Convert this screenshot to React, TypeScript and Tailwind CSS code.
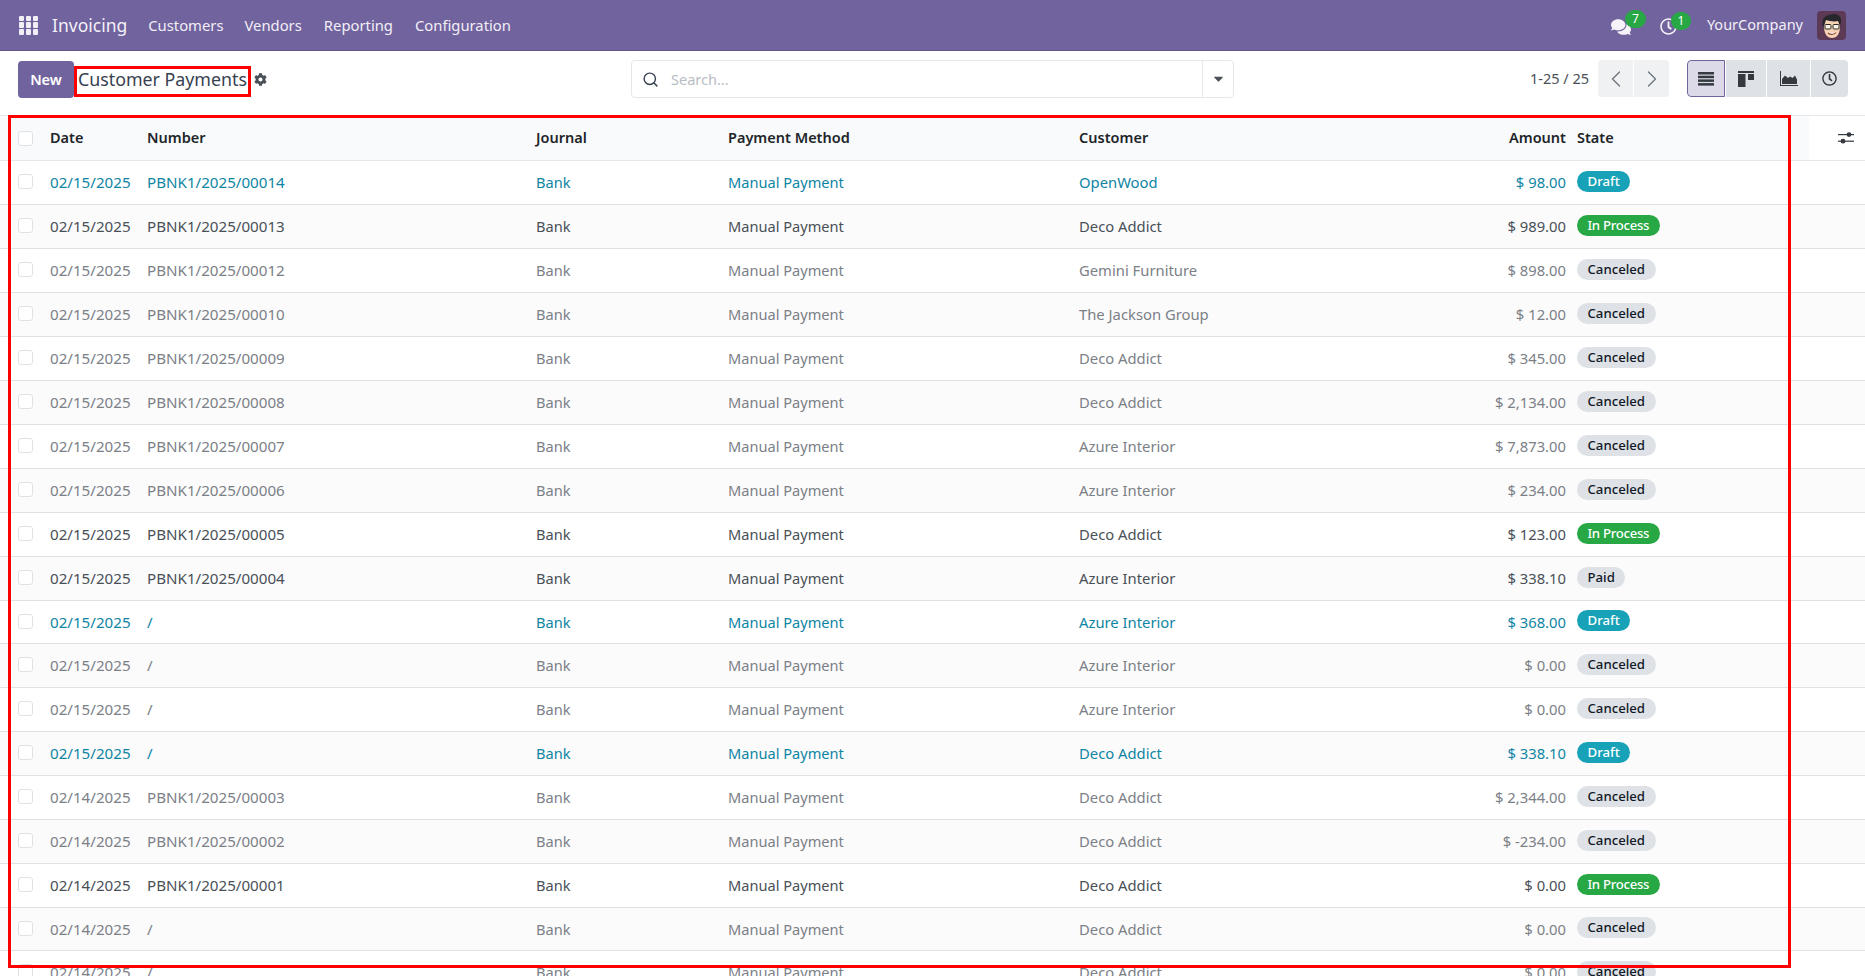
import { ChevronLeft, ChevronRight, Search } from "lucide-react";
import { FaCaretDown, FaCog, FaComments, FaRegClock } from "react-icons/fa";

type State = "Draft" | "In Process" | "Canceled" | "Paid";

interface Payment {
  date: string;
  number: string;
  customer: string;
  amount: string;
  state: State;
}

const payments: Payment[] = [
  { date: "02/15/2025", number: "PBNK1/2025/00014", customer: "OpenWood", amount: "$ 98.00", state: "Draft" },
  { date: "02/15/2025", number: "PBNK1/2025/00013", customer: "Deco Addict", amount: "$ 989.00", state: "In Process" },
  { date: "02/15/2025", number: "PBNK1/2025/00012", customer: "Gemini Furniture", amount: "$ 898.00", state: "Canceled" },
  { date: "02/15/2025", number: "PBNK1/2025/00010", customer: "The Jackson Group", amount: "$ 12.00", state: "Canceled" },
  { date: "02/15/2025", number: "PBNK1/2025/00009", customer: "Deco Addict", amount: "$ 345.00", state: "Canceled" },
  { date: "02/15/2025", number: "PBNK1/2025/00008", customer: "Deco Addict", amount: "$ 2,134.00", state: "Canceled" },
  { date: "02/15/2025", number: "PBNK1/2025/00007", customer: "Azure Interior", amount: "$ 7,873.00", state: "Canceled" },
  { date: "02/15/2025", number: "PBNK1/2025/00006", customer: "Azure Interior", amount: "$ 234.00", state: "Canceled" },
  { date: "02/15/2025", number: "PBNK1/2025/00005", customer: "Deco Addict", amount: "$ 123.00", state: "In Process" },
  { date: "02/15/2025", number: "PBNK1/2025/00004", customer: "Azure Interior", amount: "$ 338.10", state: "Paid" },
  { date: "02/15/2025", number: "/", customer: "Azure Interior", amount: "$ 368.00", state: "Draft" },
  { date: "02/15/2025", number: "/", customer: "Azure Interior", amount: "$ 0.00", state: "Canceled" },
  { date: "02/15/2025", number: "/", customer: "Azure Interior", amount: "$ 0.00", state: "Canceled" },
  { date: "02/15/2025", number: "/", customer: "Deco Addict", amount: "$ 338.10", state: "Draft" },
  { date: "02/14/2025", number: "PBNK1/2025/00003", customer: "Deco Addict", amount: "$ 2,344.00", state: "Canceled" },
  { date: "02/14/2025", number: "PBNK1/2025/00002", customer: "Deco Addict", amount: "$ -234.00", state: "Canceled" },
  { date: "02/14/2025", number: "PBNK1/2025/00001", customer: "Deco Addict", amount: "$ 0.00", state: "In Process" },
  { date: "02/14/2025", number: "/", customer: "Deco Addict", amount: "$ 0.00", state: "Canceled" },
  { date: "02/14/2025", number: "/", customer: "Deco Addict", amount: "$ 0.00", state: "Canceled" },
];

const badgeClass: Record<State, string> = {
  Draft: "bg-[#17a2b8] text-white",
  "In Process": "bg-[#28a745] text-white tracking-[-0.3px]",
  Canceled: "bg-[#dee2e6] text-[#111827]",
  Paid: "bg-[#dee2e6] text-[#111827]",
};

const rowText: Record<State, string> = {
  Draft: "text-[#0f85a3]",
  "In Process": "text-[#495057]",
  Paid: "text-[#495057]",
  Canceled: "text-[#7b8087]",
};

function AppsIcon() {
  return (
    <div className="grid grid-cols-3 gap-[1.5px] w-[19px] h-[19px]">
      {Array.from({ length: 9 }).map((_, i) => (
        <span key={i} className="bg-[#f1eff6] rounded-[1px]" />
      ))}
    </div>
  );
}

function Avatar() {
  return (
    <svg width="29" height="29" viewBox="0 0 29 29" className="rounded-[4px]">
      <rect width="29" height="29" fill="#5c3a56" />
      <path d="M7 15c0 8 3 12 8 12s8-4 8-12-3-8-8-8-8 1-8 8z" fill="#f6d3b2" />
      <path d="M6 16c-2-7 1-11 6-12 4-2 10-1 11 2 2 2 1 6 0 9l-2-5c-4 1-9 0-12-1-1 2-1 5-3 7z" fill="#26262b" />
      <rect x="8" y="13.5" width="6" height="4.5" rx="1" fill="#fdf2e3" stroke="#2a2a2e" strokeWidth="1" />
      <rect x="16" y="13.5" width="6" height="4.5" rx="1" fill="#fdf2e3" stroke="#2a2a2e" strokeWidth="1" />
      <path d="M11 22c2 2 6 2 8-.5" stroke="#8a4a3a" strokeWidth="1.2" fill="#fff" />
    </svg>
  );
}

function Checkbox() {
  return <span className="block w-[15px] h-[15px] rounded-[3px] border border-[#dee2e6] bg-white" />;
}

function NavBar() {
  return (
    <header className="h-[51px] bg-[#71639e] border-b border-[#5f5387] flex items-center text-white pl-[19px] pr-[19px]">
      <AppsIcon />
      <span className="ml-[14px] text-[17.5px] text-[#f3f1f8]">Invoicing</span>
      <nav className="flex ml-[21px] text-[14.8px] text-[#f1eff6]">
        <span>Customers</span>
        <span className="ml-[21px]">Vendors</span>
        <span className="ml-[22px]">Reporting</span>
        <span className="ml-[22px]">Configuration</span>
      </nav>
      <div className="ml-auto flex items-center">
        <div className="relative w-[20px] h-[20px]">
          <FaComments className="w-[20px] h-[20px] mt-[2px] text-[#f5f3f9]" />
          <span className="absolute -top-[5px] left-[14px] w-[21px] h-[18px] rounded-full bg-[#28a745] text-[12px] leading-[18px] text-center">7</span>
        </div>
        <div className="relative w-[17px] h-[17px] ml-[29px]">
          <FaRegClock className="w-[17px] h-[17px] mt-[1px] text-[#f5f3f9]" />
          <span className="absolute -top-[5px] left-[11px] w-[20px] h-[18px] rounded-full bg-[#28a745] text-[12px] leading-[18px] text-center">1</span>
        </div>
        <span className="ml-[30px] text-[14.5px] text-[#f1eff6]">YourCompany</span>
        <span className="ml-[14px]"><Avatar /></span>
      </div>
    </header>
  );
}

function ControlPanel() {
  return (
    <div className="h-[64px] flex items-center pl-[18px] pr-[17px] pb-[7px]">
      <div className="w-[613px] flex items-center">
        <button className="w-[56px] h-[37px] rounded-[4px] bg-[#71639e] text-white text-[14.5px] font-semibold">New</button>
        <span className="ml-[4px] text-[17.8px] text-[#374151] w-[176px]">Customer Payments</span>
        <FaCog className="w-[13px] h-[13px] text-[#495057]" />
      </div>
      <div className="w-[603px] h-[38px] -mt-[2px] flex rounded-[4px] border border-[#e5e7eb]">
        <div className="flex-1 flex items-center pl-[10px]">
          <Search className="w-[17px] h-[17px] mt-[1px] text-[#374151]" strokeWidth={2} />
          <span className="ml-[12px] mt-[2px] text-[14.5px] text-[#b8bdc4]">Search...</span>
        </div>
        <div className="w-[31px] border-l border-[#e5e7eb] flex items-center justify-center">
          <FaCaretDown className="w-[15px] h-[15px] text-[#495057]" />
        </div>
      </div>
      <div className="ml-auto -mt-[2px] flex items-center">
        <span className="text-[14.5px] text-[#495057]">1-25 / 25</span>
        <div className="ml-[9px] flex h-[37px] rounded-[4px] overflow-hidden gap-px">
          <span className="w-[35px] bg-[#f0f1f3] flex items-center justify-center">
            <ChevronLeft className="w-[28px] h-[28px] text-[#6c757d]" strokeWidth={1.1} />
          </span>
          <span className="w-[35px] bg-[#f0f1f3] flex items-center justify-center">
            <ChevronRight className="w-[28px] h-[28px] text-[#6c757d]" strokeWidth={1.1} />
          </span>
        </div>
        <div className="ml-[18px] flex h-[37px] rounded-[4px] overflow-hidden gap-px text-[#343a40]">
          <span className="w-[38px] bg-[#dcd9e8] border border-[#71639e] rounded-l-[4px] flex items-center justify-center">
            <svg width="16" height="14" viewBox="0 0 16 14" fill="currentColor">
              <rect width="16" height="2.5" />
              <rect y="3.7" width="16" height="2.5" />
              <rect y="7.4" width="16" height="2.5" />
              <rect y="11.1" width="16" height="2.5" />
            </svg>
          </span>
          <span className="w-[40px] bg-[#dee2e6] flex items-center justify-center">
            <svg width="16" height="16" viewBox="0 0 16 16" fill="currentColor">
              <rect width="16" height="2" />
              <rect y="3" width="7.5" height="13" />
              <rect x="10" y="3" width="6" height="6" />
            </svg>
          </span>
          <span className="w-[43px] bg-[#dee2e6] flex items-center justify-center">
            <svg width="18" height="15" viewBox="0 0 18 15" fill="currentColor">
              <path d="M0 0h1v14h17v1H0z" />
              <path d="M2 13V8l3-3.5 3 2.5 2-1.5 2.5 1.5L15 4.5l2 4V13z" />
            </svg>
          </span>
          <span className="w-[37px] bg-[#dee2e6] flex items-center justify-center">
            <FaRegClock className="w-[15px] h-[15px]" />
          </span>
        </div>
      </div>
    </div>
  );
}

function PaymentsTable() {
  const th = "text-left font-semibold text-[#212529] text-[14.5px] px-2";
  // cells share a baseline so the slightly different font sizes stay on one line
  const td = "px-2 pt-[10px] leading-[22px] align-baseline whitespace-nowrap overflow-hidden";
  return (
    <table className="w-[1865px] table-fixed border-collapse text-[14.6px]">
      <colgroup>
        <col className="w-[42px]" />
        <col className="w-[97px]" />
        <col className="w-[389px]" />
        <col className="w-[192px]" />
        <col className="w-[351px]" />
        <col className="w-[279px]" />
        <col className="w-[219px]" />
        <col className="w-[240px]" />
        <col className="w-[56px]" />
      </colgroup>
      <thead>
        <tr className="h-[45px] bg-[#f9fafb] border-y border-[#e5e7eb]">
          <th className="pl-[18px]"><Checkbox /></th>
          <th className={th}>Date</th>
          <th className={th}>Number</th>
          <th className={th}>Journal</th>
          <th className={th}>Payment Method</th>
          <th className={th}>Customer</th>
          <th className="text-right font-semibold text-[#212529] text-[14.5px] pr-[3px]">Amount</th>
          <th className={th}>State</th>
          <th className="bg-white">
            <svg width="16" height="14" viewBox="0 0 16 14" className="ml-[29px] text-[#343a40]" fill="currentColor">
              <rect y="3" width="16" height="1.2" />
              <circle cx="11" cy="3.6" r="2.4" />
              <rect y="9.6" width="16" height="1.2" />
              <circle cx="5" cy="10.2" r="2.4" />
            </svg>
          </th>
        </tr>
      </thead>
      <tbody>
        {payments.map((p, i) => (
          <tr
            key={i}
            className={`${i === 10 || i === 17 ? "h-[43px]" : "h-[44px]"} border-b border-[#dee2e6] ${i % 2 === 1 ? "bg-[#fbfbfb]" : "bg-white"} ${rowText[p.state]}`}
          >
            <td className="pl-[18px] pb-[2px] align-middle"><Checkbox /></td>
            <td className={`${td} text-[15.15px]`}>{p.date}</td>
            <td className={`${td} text-[15.15px]`}>{p.number}</td>
            <td className={td}>Bank</td>
            <td className={td}>Manual Payment</td>
            <td className={`${td} text-[14.8px]`}>{p.customer}</td>
            <td className={`${td} text-[14.8px] text-right pl-0 pr-[3px]`}>{p.amount}</td>
            <td className="px-2 align-middle">
              <span className={`inline-block h-[21px] leading-[21px] px-[10.5px] rounded-full text-[13.2px] font-medium align-[3px] ${badgeClass[p.state]}`}>
                {p.state}
              </span>
            </td>
            <td />
          </tr>
        ))}
      </tbody>
    </table>
  );
}

export default function App() {
  return (
    <div className="relative h-[976px] w-[1865px] overflow-hidden bg-white font-['Noto_Sans',sans-serif]">
      <NavBar />
      <ControlPanel />
      <PaymentsTable />
      {/* annotation boxes sitting on top of the screenshot */}
      <div className="absolute left-[74px] top-[66px] w-[177px] h-[31px] border-[3px] border-[#ff0000]" />
      <div className="absolute left-[8px] top-[115px] w-[1783px] h-[853px] border-[3px] border-[#ff0000]" />
    </div>
  );
}
